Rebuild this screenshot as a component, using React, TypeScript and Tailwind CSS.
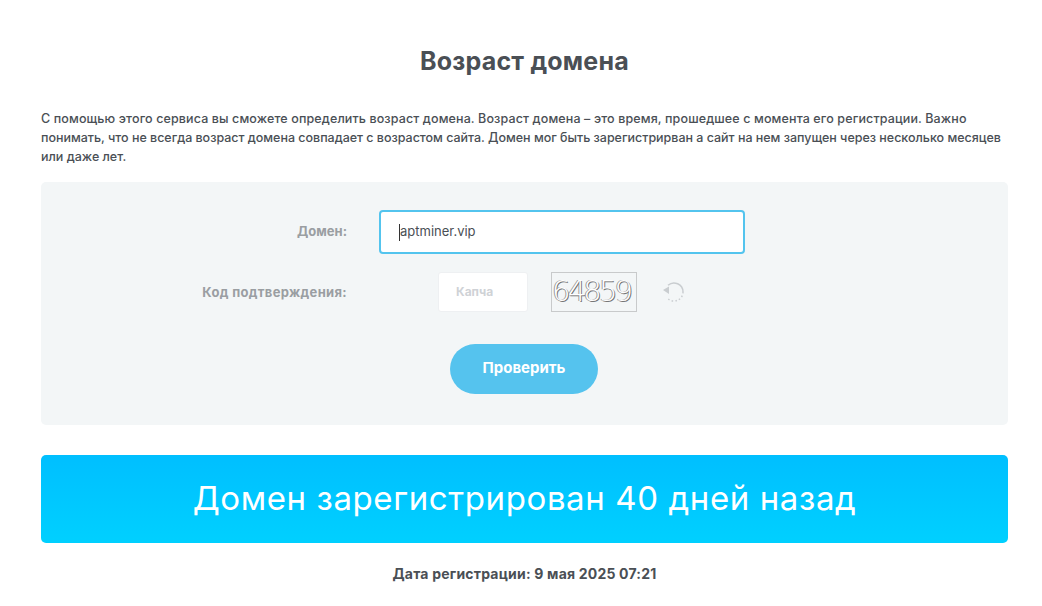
export default function App() {
  return (
    <div className="min-h-[606px] bg-white pl-[41px] pr-[34px] pt-[44px] font-['Inter',sans-serif] text-[#4a4f55] overflow-hidden">
      <h1 className="h-[34px] text-center text-[25px] leading-[34px] font-bold tracking-[0.2px] text-[#4a4f55]">Возраст домена</h1>

      <p className="mt-[31px] text-[12.5px] leading-[19px] font-medium text-[#4a4f55]">
        <span className="block whitespace-nowrap tracking-[0.12px]">С помощью этого сервиса вы сможете определить возраст домена. Возраст домена – это время, прошедшее с момента его регистрации. Важно</span>
        <span className="block whitespace-nowrap tracking-[-0.02px]">понимать, что не всегда возраст домена совпадает с возрастом сайта. Домен мог быть зарегистрирван а сайт на нем запущен через несколько месяцев</span>
        <span className="block whitespace-nowrap">или даже лет.</span>
      </p>

      <form className="mt-[16px] h-[243px] rounded-[5px] bg-[#f3f6f7] pt-[28px]">
        <div className="flex items-center">
          <label className="w-[306px] text-right text-[13px] font-bold text-[#9a9ea2]">Домен:</label>
          <div className="ml-[32px] flex h-[44px] w-[366px] items-center rounded-[4px] border-2 border-[#53c4ee] bg-white pl-[18px] text-[13px] text-[#4a4f55]">
            <span className="h-[17px] w-px bg-[#333]" />
            <span>aptminer.vip</span>
          </div>
        </div>

        <div className="mt-[18px] flex items-center">
          <label className="w-[306px] pt-[2px] text-right text-[13px] font-bold tracking-[0.33px] text-[#9a9ea2]">Код подтверждения:</label>
          <div className="ml-[91px] flex h-[40px] w-[90px] items-center rounded-[3px] border border-[#eef0f2] bg-white pl-[17px] text-[12px] font-bold text-[#cfd2d6]">Капча</div>
          <div className="ml-[23px] flex h-[40px] w-[86px] items-center border border-[#c8cacb] font-['DejaVu_Sans',sans-serif] text-[29px] font-extralight tracking-[-2.8px] text-white [text-shadow:1px_1px_0_#777,-1px_0_0_#999]">64859</div>
          <svg className="ml-[25px]" width="24" height="24" viewBox="0 0 24 24" fill="none" stroke="#c9cdd0" strokeWidth="1.5">
            <path d="M6 5.3A9 9 0 0 1 21 12" />
            <path d="M21 12A9 9 0 0 1 6 18.7" strokeDasharray="1.5 2.2" />
            <path d="M1 10 7 6.5V14Z" fill="#c9cdd0" stroke="none" />
          </svg>
        </div>

        <div className="mt-[32px] flex justify-center pr-[1px]">
          <button type="button" className="h-[50px] w-[148px] rounded-full bg-[#55c3ee] pb-[2px] text-[15px] font-bold text-white">Проверить</button>
        </div>
      </form>

      <div className="mt-[30px] flex h-[88px] items-center justify-center rounded-[5px] bg-gradient-to-b from-[#00bfff] to-[#00d0ff] text-[33px] tracking-[0.6px] text-white">
        Домен зарегистрирован 40 дней назад
      </div>

      <p className="mt-[21px] text-center text-[14px] leading-[20px] font-bold tracking-[0.2px] text-[#4a4f55]">Дата регистрации: 9 мая 2025 07:21</p>
    </div>
  );
}
